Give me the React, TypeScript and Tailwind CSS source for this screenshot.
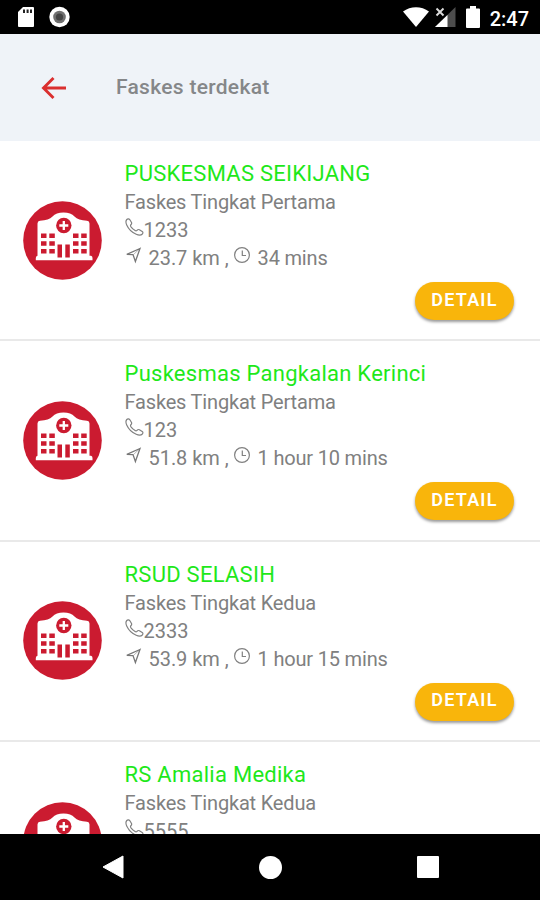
interface Facility {
  name: string;
  level: string;
  phone: string;
  distance: string;
  duration: string;
}

const facilities: Facility[] = [
  { name: 'PUSKESMAS SEIKIJANG', level: 'Faskes Tingkat Pertama', phone: '1233', distance: '23.7 km', duration: '34 mins' },
  { name: 'Puskesmas Pangkalan Kerinci', level: 'Faskes Tingkat Pertama', phone: '123', distance: '51.8 km', duration: '1 hour 10 mins' },
  { name: 'RSUD SELASIH', level: 'Faskes Tingkat Kedua', phone: '2333', distance: '53.9 km', duration: '1 hour 15 mins' },
  { name: 'RS Amalia Medika', level: 'Faskes Tingkat Kedua', phone: '5555', distance: '', duration: '' },
];

function StatusBar() {
  return (
    <div className="flex h-[34px] shrink-0 items-center bg-black pl-[18px] pr-[11px] text-white">
      <svg className="h-5 w-4" viewBox="0 0 16 20">
        <path d="M5 0h10a1 1 0 0 1 1 1v18a1 1 0 0 1-1 1H1a1 1 0 0 1-1-1V5z" fill="#fff" />
        <path d="M5 2.5h2v3.5H5zM8.6 2.5h2v3.5h-2zM12 2.5h2v3.5h-2z" fill="#222" />
      </svg>
      <svg className="ml-[15px] h-[22px] w-[22px]" viewBox="0 0 22 22">
        <circle cx="10.5" cy="11" r="10.2" fill="#fff" />
        <circle cx="10.5" cy="11" r="6.3" fill="#707070" />
        <circle cx="10.5" cy="11" r="3.6" fill="#444" />
      </svg>
      <div className="ml-auto flex items-center">
        <svg className="h-5 w-[26px]" viewBox="0 0 26 20">
          <path d="M0 4.6C7.5-1.3 18.5-1.3 26 4.6L13 20z" fill="#fff" />
        </svg>
        <svg className="ml-[6px] h-[22px] w-[21px]" viewBox="0 0 21 22">
          <path d="M20.5 1v20H0z" fill="#4d4d4d" />
          <path d="M12.5 9v12H0z" fill="#fff" />
          <path d="M1 2l8 8M9 2l-8 8" stroke="#000" strokeWidth="4" />
          <path d="M1.5 2.5l7 7M8.500 2.5l-7 7" stroke="#ddd" strokeWidth="1.9" />
        </svg>
        <svg className="ml-[10px] h-[22px] w-[14px]" viewBox="0 0 14 22">
          <path d="M4 0h6v2.5h3a1 1 0 0 1 1 1V21a1 1 0 0 1-1 1H1a1 1 0 0 1-1-1V3.500a1 1 0 0 1 1-1h3z" fill="#fff" />
        </svg>
        <span className="ml-[10px] pt-[3px] text-[20px] font-medium leading-5">2:47</span>
      </div>
    </div>
  );
}

function HospitalIcon() {
  return (
    <svg className="h-[79px] w-[79px]" viewBox="0 0 79 79">
      <circle cx="39.5" cy="39.5" r="39.3" fill="#cb1b30" />
      <path
        d="M14.5 22.5Q14.5 20 17 19.8C23 19.4 27 18 29.5 15.5Q33 11.5 40.5 11.5T51.5 15.5C54 18 58 19.4 64 19.8Q66.5 20 66.5 22.5V54.7H68Q69.5 55 69.5 57V59.3H12.8V57Q12.8 55 14.5 54.7z"
        fill="#fff"
      />
      <g fill="#cb1b30">
        <circle cx="40.8" cy="24.5" r="7.7" />
        <path d="M18 32.5h5.5v4.500H18zM26.300 32.500h5.500v4.500h-5.500zM50 32.500h5.500v4.500H50zM58.200 32.500h5.500v4.500h-5.500z" />
        <path d="M18 40.200h5.500v4.500H18zM26.300 40.200h5.500v4.500h-5.500zM50 40.200h5.500v4.500H50zM58.200 40.200h5.500v4.500h-5.500z" />
        <path d="M18 48h5.500v4.500H18zM26.300 48h5.500v4.500h-5.500zM50 48h5.500v4.500H50zM58.200 48h5.500v4.500h-5.500z" />
        <path d="M34.500 43.500h4.500v13h-4.500zM42.300 43.500h4.500v13h-4.500z" />
      </g>
      <path d="M40.8 20v9M36.3 24.5h9" stroke="#fff" strokeWidth="2.3" />
    </svg>
  );
}

function PhoneIcon() {
  return (
    <svg className="h-[18px] w-[19px]" viewBox="0 0 19 18" fill="none" stroke="#808080" strokeWidth="1.2" strokeLinejoin="round">
      <path d="M1.8 1.500C2.600.6 4 .7 4.900 1.800L6.500 4.500C6.900 5.500 6.600 6.200 5.900 6.800C5.200 7.400 5.400 8 6 8.900C7.100 10.400 8.400 11.600 10.100 12.600C10.900 13.100 11.400 13 12 12.300C12.700 11.500 13.500 11.300 14.400 11.700L17.200 13.500C18.200 14.200 18.100 15.100 17.300 16C15.900 17.500 13.500 17.300 11.200 16.300C7 14.400 3.500 11 1.700 7C.7 4.700.6 2.800 1.800 1.500z" />
    </svg>
  );
}

function NavigateIcon() {
  return (
    <svg className="h-[17px] w-[17px]" viewBox="0 0 17 17" fill="none" stroke="#777" strokeWidth="1.300" strokeLinejoin="miter">
      <path d="M15 1.500L1.800 7.300l6.200.3L10.400 14.500z" />
      <path d="M15 1.500L8.600 7.400" strokeWidth="0.500" />
    </svg>
  );
}

function ClockIcon() {
  return (
    <svg className="h-[17px] w-[17px]" viewBox="0 0 17 17" fill="none" stroke="#808080" strokeWidth="1.200">
      <circle cx="8" cy="8" r="7.4" />
      <path d="M8.300 3.500v5h3.700" />
    </svg>
  );
}

function FacilityRow({ facility }: { facility: Facility }) {
  return (
    <div className="flex h-[200.4px] shrink-0 border-b-2 border-[#e9e9e9] pl-[22.5px] pr-[26px]">
      <div className="flex w-[102px] shrink-0 items-center">
        <HospitalIcon />
      </div>
      <div className="flex flex-1 flex-col pt-[17px] text-[20px] leading-7 tracking-[-0.18px] text-[#808080]">
        <h2 className="whitespace-nowrap pt-px text-[22px] leading-[29px] tracking-[0.26px] text-[#1ee81a]">{facility.name}</h2>
        <p>{facility.level}</p>
        <div className="flex">
          <span className="pt-0.5"><PhoneIcon /></span>
          <span className="tracking-normal">{facility.phone}</span>
        </div>
        {facility.distance && (
          <div className="flex whitespace-nowrap">
            <span className="pt-[3px]"><NavigateIcon /></span>
            <span className="ml-[7px] tracking-[-0.05px]">{facility.distance} ,</span>
            <span className="ml-[5px] pt-[3px]"><ClockIcon /></span>
            <span className="ml-[7px]">{facility.duration}</span>
          </div>
        )}
        {facility.distance && (
          <button className="mt-[10px] h-[38px] w-[99px] self-end rounded-full bg-[#f9b50b] pb-[3px] text-[18px] font-semibold leading-5 tracking-[1.2px] text-white shadow-[0_2px_3px_rgba(0,0,0,0.4)]">
            DETAIL
          </button>
        )}
      </div>
    </div>
  );
}

function NavigationBar() {
  return (
    <div className="flex h-[66px] shrink-0 items-center justify-between bg-black pl-[102px] pr-[101px]">
      <svg className="h-6 w-[22px]" viewBox="0 0 22 24">
        <path d="M21 1v22L1 12z" fill="#fff" stroke="#fff" strokeLinejoin="round" />
      </svg>
      <div className="h-[23px] w-[23px] rounded-full bg-white" />
      <div className="h-[22px] w-[22px] rounded-[1px] bg-white" />
    </div>
  );
}

export default function App() {
  return (
    <div className="flex h-[900px] w-[540px] flex-col overflow-hidden bg-white font-[Roboto,sans-serif]">
      <StatusBar />
      <header className="flex h-[107px] shrink-0 items-center bg-[#eff3f8] pl-[41px]">
        <svg className="h-6 w-[26px]" viewBox="0 0 26 24" fill="none" stroke="#da2f2f" strokeWidth="2.900">
          <path d="M25 12H2.500M12.500 2L2.500 12l10 10" />
        </svg>
        <h1 className="ml-[49px] text-[21px] font-medium tracking-[0.29px] text-[#858789]">Faskes terdekat</h1>
      </header>
      <main className="flex min-h-0 flex-1 flex-col overflow-hidden">
        {facilities.map((facility) => (
          <FacilityRow key={facility.name} facility={facility} />
        ))}
      </main>
      <NavigationBar />
    </div>
  );
}
